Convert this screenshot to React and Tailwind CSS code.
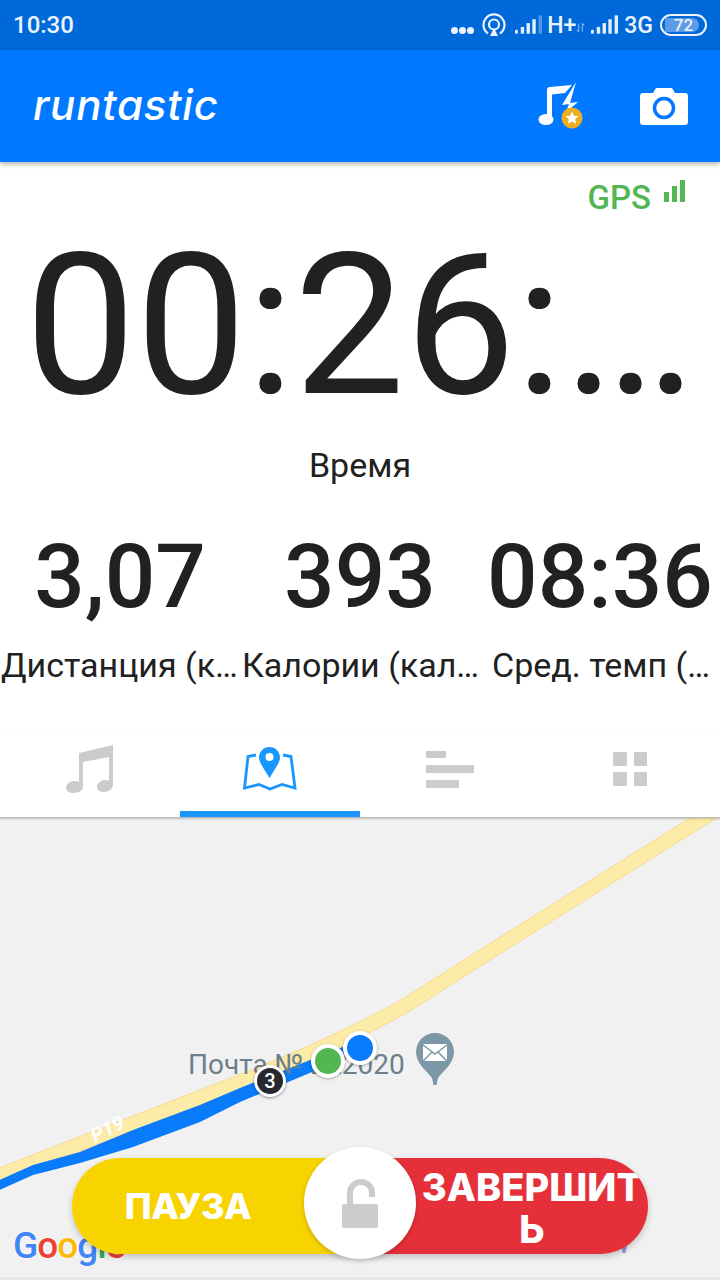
import React from 'react';

const roboto = { fontFamily: 'Roboto, sans-serif' };

function SignalBars({ faded }) {
  return (
    <svg width="27" height="21" viewBox="0 0 28 21" fill="#E3F0FF">
      <rect x="0" y="15" width="3" height="4" rx="1" />
      <rect x="6" y="12" width="3.5" height="7" />
      <rect x="12" y="8" width="3.5" height="11" />
      <rect x="18" y="4" width="3.5" height="15" />
      <rect x="24.5" y="0" width="3.5" height="19" opacity={faded ? 0.35 : 1} />
    </svg>
  );
}

function StatusBar() {
  return (
    <div className="h-[50px] bg-[#0069DA] flex items-center justify-between pl-[13px] pr-[13px] text-[#EAF3FF]">
      <span className="text-[24px] font-medium leading-none">10:30</span>
      <div className="flex items-center">
        <div className="flex gap-[1px] mt-[10px] mr-[8px]">
          <span className="w-[7px] h-[7px] rounded-full bg-[#EAF3FF]" />
          <span className="w-[7px] h-[7px] rounded-full bg-[#EAF3FF]" />
          <span className="w-[7px] h-[7px] rounded-full bg-[#EAF3FF]" />
        </div>
        <svg width="24" height="24" viewBox="0 0 24 24" fill="none" stroke="#EAF3FF" strokeWidth="2.2" className="mr-[9px]">
          <path d="M6 20.500A10.500 10.500 0 1 1 18 20.500" />
          <circle cx="12" cy="11.500" r="5" />
          <path d="M12 15l4 8H8z" fill="#EAF3FF" stroke="none" />
        </svg>
        <SignalBars faded />
        <span className="text-[23px] font-medium leading-none ml-[5px] w-[28px] whitespace-nowrap">H+</span>
        <svg width="11" height="10" viewBox="0 0 12 10" stroke="#7FB4EE" strokeWidth="1.2" className="mr-[5px] mt-[6px]">
          <path d="M4 0v9M2 7l2 2M8 9V0M8 0l2 2" fill="none" />
        </svg>
        <SignalBars />
        <span className="text-[23px] font-medium leading-none ml-[6px] mr-[7px]">3G</span>
        <div className="relative w-[47px] h-[22px] rounded-full border-2 border-[#EAF3FF] overflow-hidden flex items-center justify-center">
          <div className="absolute left-[3px] top-[2px] bottom-[2px] w-[34px] rounded-l-sm rounded-r-full bg-[#5C9BE8]" />
          <span className="relative text-[17px] font-medium leading-none">72</span>
        </div>
      </div>
    </div>
  );
}

function AppBar() {
  return (
    <div className="relative z-10 h-[112px] bg-[#0078FF] shadow-[0_2px_5px_rgba(0,0,0,0.3)] flex items-center justify-between pl-[33px] pr-[32px]">
      <span className="text-white text-[42px] italic font-medium leading-none tracking-[0.8px] -mt-[3px]" style={{ fontFamily: 'Inter, sans-serif' }}>
        runtastic
      </span>
      <div className="flex items-center gap-[56px]">
        <svg width="46" height="48" viewBox="0 0 46 48" className="-mt-[1px]">
          <ellipse cx="8" cy="37.500" rx="7.500" ry="5.500" fill="#fff" />
          <path d="M9 37V8a3 3 0 0 1 3-3l22-2-7 8-13 1.500V37z" fill="#fff" />
          <path d="M38 0 24 23l7-1-3 8 12-10-8 1z" fill="#fff" />
          <circle cx="34" cy="36" r="10.500" fill="#EDAE1F" />
          <path d="M34 29.500l2 4.200 4.500.500-3.300 3 .9 4.500-4.100-2.300-4.100 2.300.9-4.500-3.300-3 4.500-.500z" fill="#fff" />
        </svg>
        <svg width="48" height="37" viewBox="0 0 48 37">
          <path d="M3 5h10l3-5h16l3 5h10a3 3 0 0 1 3 3v26a3 3 0 0 1-3 3H3a3 3 0 0 1-3-3V8a3 3 0 0 1 3-3z" fill="#fff" />
          <circle cx="24" cy="20" r="9.500" fill="none" stroke="#0078FF" strokeWidth="3.500" />
        </svg>
      </div>
    </div>
  );
}

function Stat({ value, label, labelClass }) {
  return (
    <div className="min-w-0 text-center">
      <div className="text-[89px] font-medium leading-[88px] text-[#212121] whitespace-nowrap">{value}</div>
      <div className={`text-[34px] leading-[40px] mt-[24px] text-[#212121] truncate ${labelClass}`}>{label}</div>
    </div>
  );
}

function Tabs() {
  return (
    <div className="relative z-10 h-[88px] bg-white border-b border-[#BDBDBD] shadow-[0_1px_2px_rgba(0,0,0,0.2)] grid grid-cols-4">
      <div className="flex justify-center pt-[15px]">
        <svg width="48" height="48" viewBox="0 0 48 48" fill="#CCCCCC">
          <path d="M13 8 47 0v39c0 5-4 8-9 8-4 0-7-2-7-5 0-4 4-7 8-7 2 0 3 .300 4 1V12l-26 5v25c0 3-4 6-9 6-5 0-8-2-8-5 0-4 4-7 8-7 2 0 4 .300 5 1z" />
        </svg>
      </div>
      <div className="relative flex justify-center pt-[17px]">
        <svg width="54" height="46" viewBox="0 0 54 46">
          <path d="M26.500 0C32.500 0 37 5 37 10.500 37 16 30.500 24 26.500 31 22.500 24 16 16 16 10.500 16 5 20.500 0 26.500 0z" fill="#1A96FF" />
          <circle cx="26.500" cy="10" r="4" fill="#fff" />
          <path d="M13 8 5 9.500 1.500 41 16 37.500 27 42 39 37.500 52 41 48 9.500 40 8" fill="none" stroke="#1A96FF" strokeWidth="2.800" />
        </svg>
        <div className="absolute left-0 right-0 bottom-0 h-[6px] bg-[#1A96FF]" />
      </div>
      <div className="flex flex-col items-start gap-[7px] pl-[66px] pt-[21px]">
        <div className="w-[20px] h-[7px] bg-[#CCCCCC]" />
        <div className="w-[48px] h-[8px] bg-[#CCCCCC]" />
        <div className="w-[33px] h-[8px] bg-[#CCCCCC]" />
      </div>
      <div className="pl-[73px] pt-[22px]">
        <div className="grid grid-cols-2 gap-x-[7px] gap-y-[6px] w-[34px]">
          <div className="h-[14px] bg-[#CCCCCC]" />
          <div className="h-[14px] bg-[#CCCCCC]" />
          <div className="h-[14px] bg-[#CCCCCC]" />
          <div className="h-[14px] bg-[#CCCCCC]" />
        </div>
      </div>
    </div>
  );
}

function MapPanel() {
  const road = 'M-5 359 240 264 Q320 232 363 210 Q385 199 403 189 L477 142 593 69 700 2 730 -16';
  return (
    <div className="relative flex-1 bg-[#F1F1F1] overflow-hidden">
      {/* roads, y here starts at 818 of the screen */}
      <svg className="absolute inset-0" width="720" height="462" viewBox="0 0 720 462" fill="none">
        <path d={road} stroke="#F5DC95" strokeWidth="15" strokeLinejoin="round" />
        <path d={road} stroke="#FDEBA8" strokeWidth="13" strokeLinejoin="round" />
        <path d="M-5 364 33 347 80 334 133 312 200 287 240 270 360 222 360 234 240 284 200 304 133 329 80 345 33 357 -5 374z" fill="#0A7BFB" />
      </svg>
      <span className="absolute left-[188px] top-[229px] text-[28px] leading-[36px] text-[#6B7F8A] whitespace-nowrap">Почта № 222020</span>
      <span className="absolute left-[90px] top-[301px] text-[20px] font-bold italic leading-none text-white -rotate-[28deg]">Р19</span>

      {/* mail pin */}
      <svg className="absolute left-[415px] top-[214px]" width="40" height="56" viewBox="0 0 40 56">
        <path d="M20 1a19 19 0 0 1 19 19c0 12-12 20-16 26l-1.500 7h-3l-1.500-7C13 40 1 32 1 20A19 19 0 0 1 20 1z" fill="#7C98A6" />
        <rect x="8" y="12" width="24" height="17" rx="1" fill="#fff" />
        <path d="M8 13l12 9 12-9M8 29l9-9M32 29l-9-9" stroke="#7C98A6" strokeWidth="1.500" fill="none" />
      </svg>

      {/* route markers */}
      <div className="absolute left-[254px] top-[247px] w-[32px] h-[32px] rounded-full bg-[#252830] border-[3px] border-white shadow-[0_1px_3px_rgba(0,0,0,0.4)] flex items-center justify-center text-white text-[20px] font-medium leading-none">3</div>
      <div className="absolute left-[311px] top-[226px] w-[34px] h-[34px] rounded-full bg-[#53B653] border-[4px] border-white shadow-[0_1px_3px_rgba(0,0,0,0.3)]" />
      <div className="absolute left-[343px] top-[213px] w-[34px] h-[34px] rounded-full bg-[#0A7BFB] border-[4px] border-white shadow-[0_1px_3px_rgba(0,0,0,0.3)]" />

      {/* google mark sits behind the buttons */}
      <span className="absolute left-[13px] top-[405px] text-[37px] leading-[46px] font-medium tracking-[-1px] [text-shadow:0_0_3px_#fff]">
        <span className="text-[#4285F4]">G</span>
        <span className="text-[#EA4335]">o</span>
        <span className="text-[#FBBC05]">o</span>
        <span className="text-[#4285F4]">g</span>
        <span className="text-[#34A853]">l</span>
        <span className="text-[#EA4335]">e</span>
      </span>
      {/* tip of a map pin peeking out under the red button */}
      <svg className="absolute left-[620px] top-[422px]" width="8" height="14" viewBox="0 0 8 14">
        <path d="M0 0h8L5.500 13h-3z" fill="#8D9BD8" />
      </svg>

      {/* pause / finish control */}
      <div className="absolute left-[72px] top-[340px] w-[576px] h-[96px] grid grid-cols-2 rounded-full overflow-hidden shadow-[0_3px_6px_rgba(0,0,0,0.2)]">
        <div className="bg-[#F7D400] flex items-center justify-center pr-[56px] text-white text-[36px] tracking-[-0.5px] font-extrabold leading-none" style={{ fontFamily: 'Inter, sans-serif' }}>
          ПАУЗА
        </div>
        <div className="bg-[#E63039] flex items-center justify-center pl-[56px] pt-[4px] text-white text-[38px] font-extrabold leading-[42px] text-center break-all" style={{ fontFamily: 'Inter, sans-serif' }}>
          ЗАВЕРШИТЬ
        </div>
      </div>
      <div className="absolute left-[304px] top-[329px] w-[112px] h-[112px] rounded-full bg-white shadow-[0_2px_5px_rgba(0,0,0,0.2)] flex items-center justify-center">
        <svg width="36" height="49" viewBox="0 0 36 49">
          <path d="M8 26V14a11 11 0 0 1 22 0v4" fill="none" stroke="#CCCCCC" strokeWidth="6" />
          <rect x="0" y="25" width="36" height="24" rx="2" fill="#CCCCCC" />
        </svg>
      </div>
      <div className="absolute left-0 right-0 bottom-0 h-[3px] bg-[#E6E6E6]" />
    </div>
  );
}

export default function App() {
  return (
    <div className="w-[720px] h-[1280px] flex flex-col bg-white overflow-hidden" style={roboto}>
      <StatusBar />
      <AppBar />
      <div className="h-[568px] flex flex-col">
        <div className="flex justify-end items-start pr-[35px] pt-[17px] h-[54px]">
          <span className="text-[33px] font-medium leading-[38px] text-[#53B653]">GPS</span>
          <svg width="21" height="22" viewBox="0 0 21 22" fill="#53B653" className="ml-[13px] mt-[1px]">
            <rect x="0" y="12" width="5" height="10" />
            <rect x="8" y="6" width="5" height="16" />
            <rect x="16" y="0" width="5" height="22" />
          </svg>
        </div>
        <div className="text-[197px] leading-[197px] text-center text-[#212121] whitespace-nowrap mt-[11px]">00:26:…</div>
        <div className="text-[34px] leading-[40px] text-center text-[#212121] mt-[21px]">Время</div>
        <div className="grid grid-cols-3 mt-[48px]">
          <Stat value="3,07" label="Дистанция (км/миль)" labelClass="pl-[1px]" />
          <Stat value="393" label="Калории (калорий)" labelClass="pl-[2px]" />
          <Stat value="08:36" label="Сред. темп (мин/км)" labelClass="pl-[12px]" />
        </div>
      </div>
      <Tabs />
      <MapPanel />
    </div>
  );
}
